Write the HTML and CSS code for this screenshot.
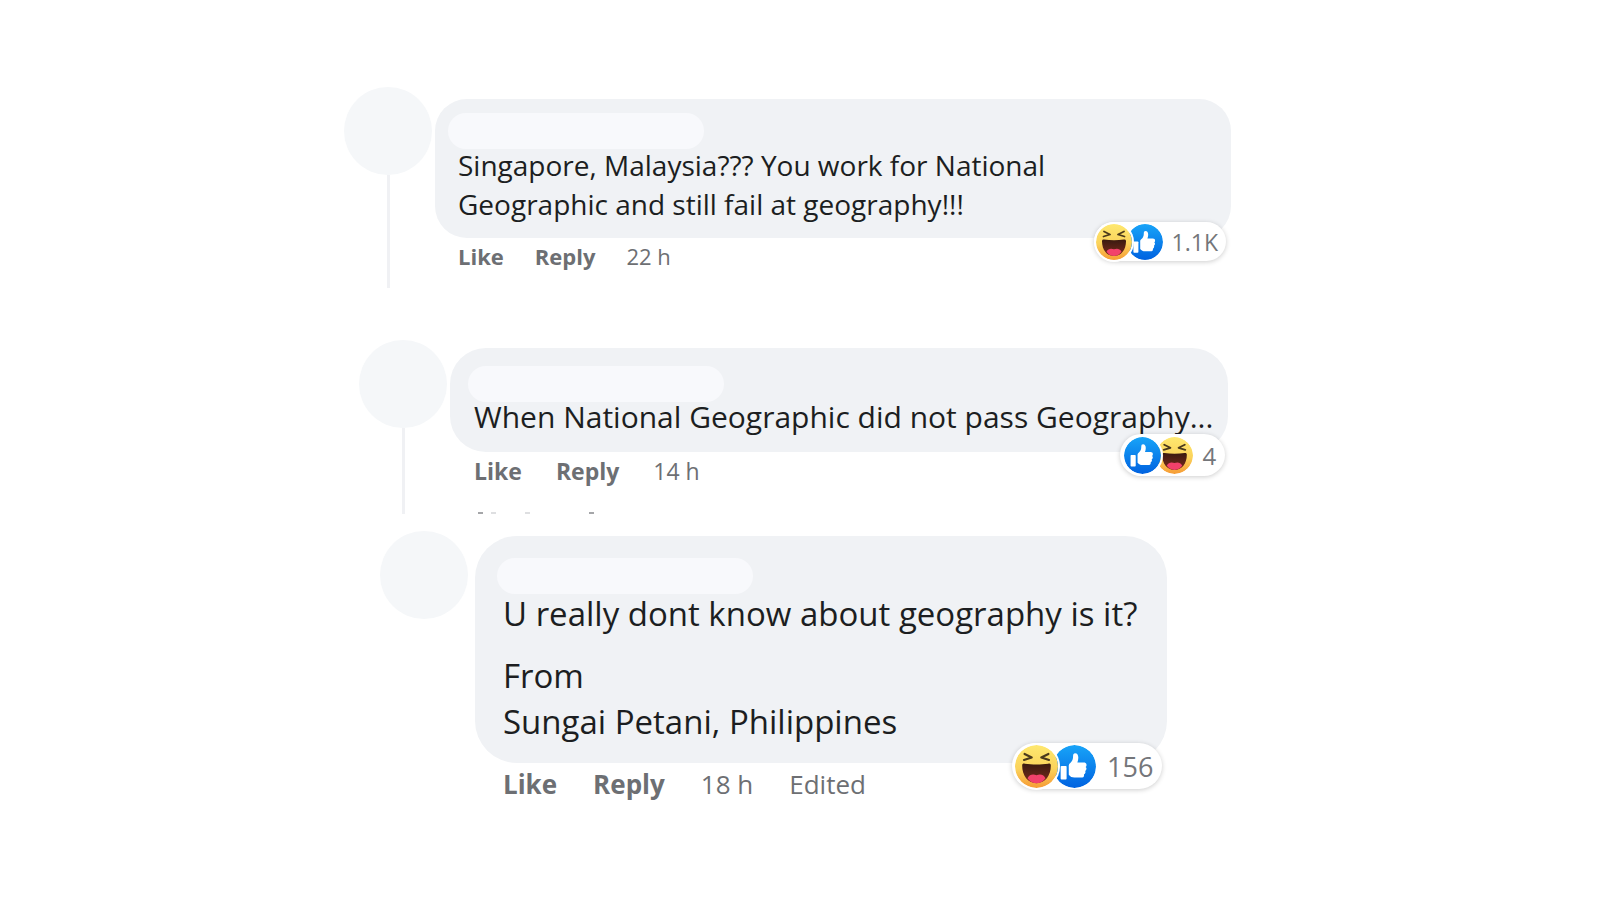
FILE: index.html
```html
<!DOCTYPE html>
<html lang="en">
<head>
<meta charset="utf-8">
<title>Comments</title>
<link rel="stylesheet" href="styles.css">
</head>
<body>
<svg class="defs" aria-hidden="true">
  <defs>
    <linearGradient id="yellow" x1="0" y1="0" x2="0" y2="1">
      <stop offset="0" stop-color="#fee86f"/><stop offset="0.55" stop-color="#fbd35b"/><stop offset="1" stop-color="#f69b35"/>
    </linearGradient>
    <linearGradient id="blue" x1="0" y1="0" x2="0" y2="1">
      <stop offset="0" stop-color="#18a4f8"/><stop offset="1" stop-color="#0062e0"/>
    </linearGradient>
    <linearGradient id="mouth" x1="0" y1="0" x2="0" y2="1">
      <stop offset="0" stop-color="#3a1a10"/><stop offset="1" stop-color="#7a2a1c"/>
    </linearGradient>
    <symbol id="haha" viewBox="0 0 36 36">
      <circle cx="18" cy="18" r="18" fill="url(#yellow)"/>
      <path d="M8 7.500l6 3-6.500 2M28 7.500l-6 3 6.500 2" fill="none" stroke="#4b3a1c" stroke-width="1.800" stroke-linecap="round" stroke-linejoin="round"/>
      <path d="M6 17.200c0-1.300.8-1.800 2.200-1.600 6 .9 13.600.9 19.600 0 1.400-.2 2.200.3 2.200 1.600 0 8.600-4.800 14.800-12 14.800S6 25.800 6 17.200z" fill="url(#mouth)"/>
      <path d="M10.500 27.800C12.200 24.200 15.500 24.400 18 25.300c2.500-.9 5.800-1.100 7.500 2.500C23.600 30.600 21 32 18 32s-5.600-1.400-7.500-4.200z" fill="#f2416b"/>
    </symbol>
    <symbol id="thumb" viewBox="0 0 36 36">
      <circle cx="18" cy="18" r="18" fill="url(#blue)"/>
      <path d="M7.200 17.500h3.400c.5 0 .8.300.8.800v9.700c0 .5-.3.800-.8.800H7.200c-.5 0-.8-.3-.8-.8v-9.700c0-.5.300-.8.800-.8z" fill="#fff"/>
      <path d="M13.200 25v-7.700c0-1 .5-1.600 1.300-2.300 1.700-1.500 2.300-3.300 2.300-5.600 0-1.600.6-2.400 1.700-2.400 1.900 0 2.700 1.700 2.700 3.700 0 1.500-.4 2.800-.8 3.900h5.400c1.500 0 2.300.9 2.300 2.100 0 .8-.3 1.300-.8 1.700.6.500.8 1 .7 1.700-.1.800-.5 1.300-1.100 1.600.3.500.4 1 .2 1.600-.2.700-.6 1.100-1.200 1.400.4 1.900-.6 2.600-2.500 2.600h-5.500c-2 0-3.300-.6-4.700-2.300z" fill="#fff"/>
    </symbol>
  </defs>
</svg>
<main class="thread">
  <article class="comment first">
    <div class="rail"><span class="avatar"></span><span class="line"></span></div>
    <div class="body">
      <div class="bubble">
        <span class="name"></span>
        <p>Singapore, Malaysia??? You work for National Geographic and still fail at geography!!!</p>
        <button class="reactions" type="button"><svg class="front"><use href="#haha"/></svg><svg><use href="#thumb"/></svg><span>1.1K</span></button>
      </div>
      <div class="actions"><button type="button">Like</button><button type="button">Reply</button><span>22 h</span></div>
    </div>
  </article>
  <article class="comment second">
    <div class="rail"><span class="avatar"></span><span class="line"></span></div>
    <div class="body">
      <div class="bubble">
        <span class="name"></span>
        <p>When National Geographic did not pass Geography...</p>
        <button class="reactions" type="button"><svg class="front"><use href="#thumb"/></svg><svg><use href="#haha"/></svg><span>4</span></button>
      </div>
      <div class="actions"><button type="button">Like</button><button type="button">Reply</button><span>14 h</span></div>
      <div class="cutoff"><i></i><i class="faint"></i><i class="faint"></i><i></i></div>
    </div>
  </article>
  <article class="comment third">
    <div class="rail"><span class="avatar"></span></div>
    <div class="body">
      <div class="bubble">
        <span class="name"></span>
        <p>U really dont know about geography is it?</p>
        <p>From<br>Sungai Petani, Philippines</p>
        <button class="reactions" type="button"><svg class="front"><use href="#haha"/></svg><svg><use href="#thumb"/></svg><span>156</span></button>
      </div>
      <div class="actions"><button type="button">Like</button><button type="button">Reply</button><span>18 h</span><span>Edited</span></div>
    </div>
  </article>
</main>
</body>
</html>
```
FILE: styles.css
```css
* { box-sizing: border-box; }
body { margin: 0; background: #fff; color: #1c1e21; font-family: "Segoe UI", "Open Sans", "Noto Sans", sans-serif; }
button { font: inherit; color: inherit; border: 0; padding: 0; background: none; cursor: pointer; }
p { margin: 0; }
.defs { position: absolute; width: 0; height: 0; }

.thread { max-width: 912px; margin: 0 auto; padding: 87px 25px 0 0; }
.comment { display: flex; }
.rail { display: flex; flex-direction: column; align-items: center; flex: none; width: 88px; }
.avatar { width: 88px; height: 88px; border-radius: 50%; background: #f5f7f9; }
.line { flex: 1; width: 3px; background: #f0f1f4; }
.body { min-width: 0; }
.bubble { position: relative; background: #f0f2f5; }
.name { display: block; width: 256px; max-width: 100%; height: 36px; border-radius: 18px; background: #f8f9fc; }
.name + p { margin-top: -3px; }
.actions { display: flex; color: #6d6f73; }
.actions button { font-weight: 700; }

.reactions { position: absolute; display: flex; align-items: center; border-radius: 24px; background: #fff; box-shadow: 0 1px 5px rgba(0, 0, 0, 0.2); color: #74767a; }
.reactions svg { display: block; border-radius: 50%; }
.reactions svg + svg { margin-left: -5px; }
.reactions .front { position: relative; box-shadow: 0 0 0 2px #fff; }

.first { min-height: 201px; }
.first .body { flex: 1; padding: 12px 0 0 3px; }
.first .bubble { padding: 14px 160px 14px 13px; border-radius: 32px; }
.first p { padding-left: 10px; font-size: 28px; line-height: 39px; }
.first .actions { gap: 31px; padding-left: 23px; font-size: 22px; line-height: 36px; }
.first .reactions { right: 5px; bottom: -23px; height: 39px; padding: 0 8px 0 2px; font-size: 23px; }
.first .reactions svg { width: 36px; height: 36px; }
.first .reactions span { margin-left: 9px; }

.second { margin: 52px 0 0 15px; min-height: 174px; }
.second .body { padding: 8px 0 0 3px; }
.second .bubble { padding: 18px 15px 18px 18px; border-radius: 36px; }
.second p { padding-left: 6px; font-size: 30px; line-height: 35px; }
.second .actions { gap: 34px; padding-left: 24px; font-size: 23px; line-height: 38px; }
.second .reactions { right: 3px; bottom: -24px; height: 42px; padding: 0 9px 0 4px; font-size: 24px; }
.second .reactions svg { width: 37px; height: 37px; }
.second .reactions span { margin-left: 10px; }
.cutoff { display: grid; grid-template-columns: 13px 34px 64px 5px; padding: 22px 0 0 28px; }
.cutoff i { width: 5px; height: 2px; background: #a5a6a9; }
.cutoff .faint { background: #dedfe1; }

.third { margin: 17px 0 0 36px; }
.third .body { padding: 5px 0 0 7px; }
.third .bubble { padding: 22px 30px 18px 22px; border-radius: 42px; }
.third p { padding-left: 6px; font-size: 33px; line-height: 46px; }
.third p + p { margin-top: 16px; }
.third .actions { gap: 36px; padding-left: 28px; font-size: 26px; line-height: 42px; }
.third .reactions { right: 5px; bottom: -26px; height: 46px; padding: 0 9px 0 3px; font-size: 27px; }
.third .reactions svg { width: 43px; height: 43px; }
.third .reactions span { margin-left: 11px; }
```
